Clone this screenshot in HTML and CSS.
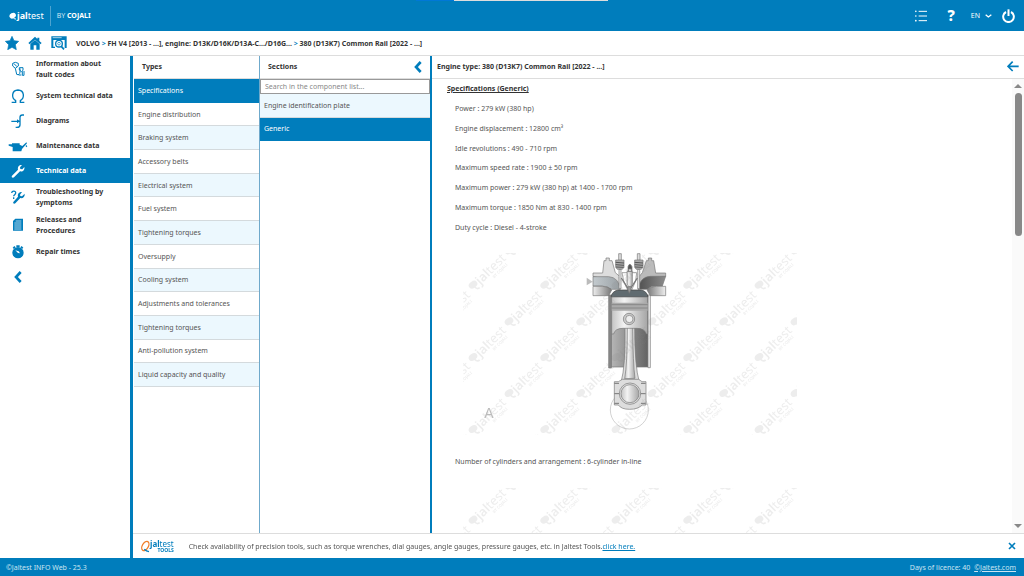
FILE: index.html
```html
<!DOCTYPE html>
<html lang="en">
<head>
    <meta charset="UTF-8">
    <meta name="viewport" content="width=device-width, initial-scale=1.0">
    <title>Jaltest INFO Web</title>
    <link rel="stylesheet" href="styles.css">
</head>
<body>
    <header class="topbar">
        <div class="loader"><span></span></div>
        <a href="#" class="logo">
            <svg class="logo-mark" viewBox="0 0 24 27"><ellipse cx="11" cy="14" rx="10" ry="8" transform="rotate(-30 11 14)"/><path d="M12 19q3 6 9 5" fill="none" stroke="#fff" stroke-width="3"/></svg>
            <span class="logo-name"><b>jal</b>test</span>
        </a>
        <span class="by">BY <b>COJALI</b></span>
        <div class="tools">
            <button class="tool-list" aria-label="List">
                <svg viewBox="0 0 36 36"><path d="M11 4h25M11 18h25M11 32h25" stroke="#fff" stroke-width="3"/><circle cx="2.500" cy="4" r="2.500"/><circle cx="2.500" cy="18" r="2.500"/><circle cx="2.500" cy="32" r="2.500"/></svg>
            </button>
            <button class="tool-help" aria-label="Help">?</button>
            <button class="tool-lang">EN
                <svg viewBox="0 0 21 12"><path d="M2 2l8 7 9-7" fill="none" stroke="#fff" stroke-width="4"/></svg>
            </button>
            <button class="tool-power" aria-label="Log out">
                <svg viewBox="0 0 39 42"><path d="M12 9a16 16 0 1 0 15 0" fill="none" stroke="#fff" stroke-width="6"/><path d="M19.500 1v20" stroke="#fff" stroke-width="6"/></svg>
            </button>
        </div>
    </header>

    <nav class="crumbs">
        <a href="#" aria-label="Favourites"><svg class="icon-star" viewBox="0 0 42 42"><path d="M21 1l6 13 14 2-10 10 3 15-13-7-13 7 3-15L1 16l14-2z" stroke="#007dbc" stroke-width="2"/></svg></a>
        <a href="#" aria-label="Home"><svg class="icon-home" viewBox="0 0 42 42"><path d="M21 2L1 21l4 4 16-14 16 14 4-4-7-6V5h-6v4z"/><path d="M7 24L21 12l14 12v17H25V28h-8v13H7z"/></svg></a>
        <a href="#" aria-label="Search vehicle"><svg class="icon-find" viewBox="0 0 48 42"><path d="M1 1h46v35h-6V12H7v20h5v4H1z"/><path d="M5 5h27" stroke="#fff" stroke-width="2"/><circle cx="24" cy="23" r="10" fill="#fff" stroke="#007dbc" stroke-width="4"/><circle cx="24" cy="23" r="4" fill="none" stroke="#007dbc" stroke-width="2"/><path d="M31 31l8 9" stroke="#007dbc" stroke-width="5"/></svg></a>
        <p>VOLVO <i>&gt;</i> FH V4 [2013 - ...], engine: D13K/D16K/D13A-C.../D16G... <i>&gt;</i> 380 (D13K7) Common Rail [2022 - ...]</p>
    </nav>

    <main class="main">
        <aside class="sidebar">
            <a href="#" class="item">
                <svg viewBox="0 0 48 48"><g fill="none" stroke="#007dbc" stroke-width="3"><path d="M8 7l8-3 9 3v8l-9 7-8-7zM12 8l9 9M16 22l4 18q9 4 10-7V22"/><path d="M28 20h11v8l-4 4-7-5zM37 31v12h5V30M26 42h8"/></g></svg>
                <span>Information about fault codes</span>
            </a>
            <a href="#" class="item">
                <svg viewBox="0 0 48 48"><path d="M5 43h12v-5C3 29 5 7 24 6c19 1 21 23 7 32v5h12" fill="none" stroke="#007dbc" stroke-width="4"/></svg>
                <span>System technical data</span>
            </a>
            <a href="#" class="item">
                <svg viewBox="0 0 48 48"><path d="M4 25h24M42 6h-5q-7 0-7 7v22q0 8-9 8h-4" fill="none" stroke="#007dbc" stroke-width="4"/><path d="M21 19l9 6-9 6z"/></svg>
                <span>Diagrams</span>
            </a>
            <a href="#" class="item">
                <svg class="wide" viewBox="0 0 60 48"><path d="M2 19h10v-3h23v4l8 4 12-11 2 3-15 17-2 7H14V27L2 23zM54 20l4 5-3 3-2-3z"/></svg>
                <span>Maintenance data</span>
            </a>
            <a href="#" class="item active">
                <svg viewBox="0 0 48 48"><path d="M6 38l18-18c-2-9 4-15 12-14l-6 7 1 5 6 1 6-7c2 9-5 15-13 13L12 43c-4 3-9-1-6-5z"/></svg>
                <span>Technical data</span>
            </a>
            <a href="#" class="item">
                <svg viewBox="0 0 48 48"><path d="M5 12c1-8 13-7 12 0 0 5-6 5-6 10M11 25v5" fill="none" stroke="#007dbc" stroke-width="4"/><path d="M10 39l14-16c-2-8 3-14 12-14l-6 8 1 4 5 1 8-8c1 10-6 15-13 13L16 43c-4 3-8-1-6-4z"/></svg>
                <span>Troubleshooting by symptoms</span>
            </a>
            <a href="#" class="item">
                <svg viewBox="0 0 48 48"><path d="M16 5h23v36H9V12z"/><path d="M17 12h17M13 18h21M13 24h21M13 30h21M13 36h21" stroke="#fff" stroke-width="2"/></svg>
                <span>Releases and Procedures</span>
            </a>
            <a href="#" class="item">
                <svg viewBox="0 0 48 48"><path d="M19 4h10v5H19zM8 11l5-5 4 4-5 5zM31 10l4-4 5 5-4 4z"/><circle cx="24" cy="26" r="17"/><path d="M16 19l8 8 6 1-4-6z" fill="#fff"/></svg>
                <span>Repair times</span>
            </a>
            <button class="collapse" aria-label="Collapse menu">
                <svg class="chevron" viewBox="0 0 24 36"><path d="M20 3L6 18l14 15" fill="none" stroke="#007dbc" stroke-width="8"/></svg>
            </button>
        </aside>

        <div class="workspace">
            <div class="panels">
                <section class="types">
                    <h2>Types</h2>
                    <ul class="list">
                        <li class="active"><a href="#">Specifications</a></li>
                        <li><a href="#">Engine distribution</a></li>
                        <li><a href="#">Braking system</a></li>
                        <li><a href="#">Accessory belts</a></li>
                        <li><a href="#">Electrical system</a></li>
                        <li><a href="#">Fuel system</a></li>
                        <li><a href="#">Tightening torques</a></li>
                        <li><a href="#">Oversupply</a></li>
                        <li><a href="#">Cooling system</a></li>
                        <li><a href="#">Adjustments and tolerances</a></li>
                        <li><a href="#">Tightening torques</a></li>
                        <li><a href="#">Anti-pollution system</a></li>
                        <li><a href="#">Liquid capacity and quality</a></li>
                    </ul>
                </section>

                <section class="sections">
                    <h2>Sections
                        <button aria-label="Collapse sections"><svg class="chevron" viewBox="0 0 24 36"><path d="M20 3L6 18l14 15" fill="none" stroke="#007dbc" stroke-width="8"/></svg></button>
                    </h2>
                    <input type="text" class="search" aria-label="Search in the component list" placeholder="Search in the component list...">
                    <ul class="list short">
                        <li class="tint"><a href="#">Engine identification plate</a></li>
                        <li class="active"><a href="#">Generic</a></li>
                    </ul>
                </section>

                <section class="detail">
                    <h2>Engine type: 380 (D13K7) Common Rail [2022 - ...]
                        <button aria-label="Back"><svg class="icon-back" viewBox="0 0 36 33"><path d="M17 2L3 16l14 14M3 16h32" fill="none" stroke="#007dbc" stroke-width="5"/></svg></button>
                    </h2>
                    <div class="scroll">
                        <div class="content">
                            <h3>Specifications (Generic)</h3>
                            <ul class="specs">
                                <li>Power : 279 kW (380 hp)</li>
                                <li>Engine displacement : 12800 cm³</li>
                                <li>Idle revolutions : 490 - 710 rpm</li>
                                <li>Maximum speed rate : 1900 ± 50 rpm</li>
                                <li>Maximum power : 279 kW (380 hp) at 1400 - 1700 rpm</li>
                                <li>Maximum torque : 1850 Nm at 830 - 1400 rpm</li>
                                <li>Duty cycle : Diesel - 4-stroke</li>
                            </ul>

                            <svg class="figure" viewBox="69 39 1002 546">
                                <defs>
                                    <linearGradient id="metal"><stop offset="0" stop-color="#c4c4c4"/><stop offset=".35" stop-color="#f3f3f3"/><stop offset="1" stop-color="#a5a5a5"/></linearGradient>
                                    <linearGradient id="bore"><stop offset="0" stop-color="#b5b5b5"/><stop offset="1" stop-color="#636363"/></linearGradient>
                                    <linearGradient id="intake"><stop offset="0" stop-color="#c3cace"/><stop offset="1" stop-color="#9aa1a5"/></linearGradient>
                                    <linearGradient id="exhaust"><stop offset="0" stop-color="#4f4f4f"/><stop offset="1" stop-color="#8c8c8c"/></linearGradient>
                                    <linearGradient id="flangeLeft"><stop offset="0" stop-color="#eee"/><stop offset="1" stop-color="#777"/></linearGradient>
                                    <linearGradient id="flangeRight"><stop offset="0" stop-color="#777"/><stop offset="1" stop-color="#eee"/></linearGradient>
                                    <g id="mark">
                                        <ellipse rx="14" ry="10" transform="rotate(-35)"/>
                                        <path d="M5 7q8 8 15 2" fill="none" stroke="#888" stroke-width="5"/>
                                        <g transform="rotate(-45)">
                                            <text x="15" y="17" font-size="38"><tspan font-weight="600">jal</tspan>test</text>
                                            <text x="58" y="32" font-size="12" font-weight="600">BY COJALI</text>
                                        </g>
                                    </g>
                                    <g id="marks">
                                        <use href="#mark"/><use href="#mark" x="215"/><use href="#mark" x="430"/><use href="#mark" x="644"/><use href="#mark" x="859"/><use href="#mark" x="1073"/>
                                    </g>
                                    <g id="watermark" fill="#888" opacity=".15">
                                        <use href="#marks" x="-8" y="31"/>
                                        <use href="#marks" x="-116" y="134"/>
                                        <use href="#marks" x="-8" y="244"/>
                                        <use href="#marks" x="-116" y="351"/>
                                        <use href="#marks" x="-8" y="459"/>
                                        <use href="#marks" x="-116" y="567"/>
                                        <use href="#marks" x="-8" y="674"/>
                                    </g>
                                </defs>
                                <path d="M440 113l18 12-18 11z" fill="#bbb"/>
                                <g transform="translate(360 0)" stroke="#777" stroke-width="2">
                                    <!-- crank circle, bore and walls -->
                                    <circle cx="208" cy="510" r="57" fill="#fff" stroke="#bbb"/>
                                    <path d="M154 165h110v216H154z" fill="url(#bore)"/>
                                    <path d="M146 165h8v219h-8z" fill="#888"/>
                                    <path d="M264 165h7v218h-7z" fill="#eee"/>
                                    <!-- cylinder head -->
                                    <path d="M99 99h29l4-37h6v-8h10v8h8l10 36 14 12v35h-35q-20-33-46-36z" fill="#ddd"/>
                                    <path d="M317 99h-30l-6-37h-6v-8h-10v8h-6l-12 36-10 12v35h30q20-33 50-36z" fill="#bbb"/>
                                    <path d="M99 110h47q30 2 35 38h-28q-9-10-28-10H99z" fill="url(#intake)"/>
                                    <path d="M317 109h-46q-31 1-37 39h28q9-10 28-10h17z" fill="url(#exhaust)"/>
                                    <path d="M99 139h28q21 2 28 11l-9 17H99z" fill="url(#flangeLeft)"/>
                                    <path d="M317 139h-28q-21 2-28 11l10 17h46z" fill="url(#flangeRight)"/>
                                    <!-- valves, springs, injector -->
                                    <path d="M176 41h8v20h-8zM232 41h8v20h-8z" fill="#ddd"/>
                                    <path d="M177 88h6v58h-6zM233 88h6v58h-6z" fill="#eee"/>
                                    <path d="M167 60h25v22l-5 6h-15l-5-6zM224 60h25v22l-5 6h-15l-5-6z" fill="#aaa"/>
                                    <path d="M167 67l25 2m-25 5l25 2m-24 5l23 1M224 67l25 2m-25 5l25 2m-24 5l23 1" stroke="#555" stroke-width="3"/>
                                    <path d="M186 98h44l-3 25-12 27h-12l-12-27z" fill="#fff"/>
                                    <path d="M184 114l22 34M232 114l-22 34" stroke-width="4"/>
                                    <path d="M201 94h16v38l-5 8h-6l-5-8z" fill="url(#metal)"/>
                                    <path d="M204 80q5-14 12 0v14h-12z" fill="#555"/>
                                    <path d="M206 87h8v7h-8z" fill="#eee"/>
                                    <path d="M153 171q3-18 22-21h68q18 3 21 21z" fill="#606b70" stroke="#444"/>
                                    <path d="M203 140h11l-2 10-4 10-4-10z" fill="#999"/>
                                    <!-- connecting rod and piston -->
                                    <path d="M195 262h29q0 118 14 164l-55 1q14-48 12-165z" fill="#ddd"/>
                                    <path d="M202 262h16q1 110 7 153l-31 1q8-45 8-154z" fill="url(#metal)"/>
                                    <path d="M155 171h108v111h-4q-5-17-28-17h-42q-24 0-28 17h-6z" fill="url(#metal)"/>
                                    <path d="M155 188h108v24H155z" fill="#aaa" stroke="none"/>
                                    <path d="M155 194h108m-108 10h108" stroke="#777"/>
                                    <circle cx="207" cy="237" r="17" fill="#ccc"/>
                                    <circle cx="208" cy="237" r="11" fill="#eee"/>
                                    <path d="M163 425h12l12-7h49l10 7h12v70h-12q-12 13-37 13t-34-13h-12z" fill="#ddd"/>
                                    <path d="M163 461h94M163 430h14m66 0h14M163 490h14m66 0h14" stroke-width="3"/>
                                    <circle cx="210" cy="461" r="32" fill="#ddd"/>
                                    <circle cx="210" cy="461" r="27" fill="url(#metal)"/>
                                </g>
                                <use href="#watermark"/>
                                <text class="figure-letter" x="133" y="533">A</text>
                            </svg>

                            <p>Number of cylinders and arrangement : 6-cylinder in-line</p>

                            <svg class="figure" viewBox="69 39 1002 546"><use href="#watermark"/></svg>
                        </div>
                        <div class="scrollbar">
                            <span class="up"></span>
                            <span class="thumb"></span>
                            <span class="down"></span>
                        </div>
                    </div>
                </section>
            </div>

            <div class="notice">
                <span class="notice-logo">
                    <svg viewBox="0 0 27 39"><ellipse cx="13" cy="18" rx="9" ry="15" transform="rotate(30 13 18)" fill="none" stroke="#f07d28" stroke-width="4"/><path d="M10 28q6 6 14 7" fill="none" stroke="#007dbc" stroke-width="4"/></svg>
                    <span class="notice-name"><span><b>jal</b>test</span><small>TOOLS</small></span>
                </span>
                <p>Check availability of precision tools, such as torque wrenches, dial gauges, angle gauges, pressure gauges, etc. in Jaltest Tools.<a href="#">click here.</a></p>
                <button aria-label="Close"><svg viewBox="0 0 24 24"><path d="M3 3l18 18M21 3L3 21" stroke="#007dbc" stroke-width="5"/></svg></button>
            </div>
        </div>
    </main>

    <footer class="footer">
        <span>©Jaltest INFO Web - 25.3</span>
        <span>Days of licence: 40 <a href="#">©Jaltest.com</a></span>
    </footer>
</body>
</html>
```
FILE: styles.css
```css
* {
    box-sizing: border-box;
}

body {
    margin: 0;
    height: 100vh;
    display: flex;
    flex-direction: column;
    overflow: hidden;
    font-family: "Noto Sans", "Open Sans", sans-serif;
    font-size: 7px;
    line-height: 11px;
    color: #555;
    background: #fff;
}

h2, h3, p, ul {
    margin: 0;
    padding: 0;
}

ul {
    list-style: none;
}

a {
    color: inherit;
    text-decoration: none;
}

button {
    display: flex;
    align-items: center;
    padding: 0;
    border: 0;
    background: none;
    font: inherit;
    color: inherit;
    cursor: pointer;
}

svg {
    display: block;
    flex: none;
    fill: #007dbc;
}

/* top bar */
.topbar {
    position: relative;
    flex: none;
    display: flex;
    align-items: center;
    height: 31px;
    padding: 0 9px;
    background: #007dbc;
    color: #fff;
}

.topbar svg {
    fill: #fff;
}

.loader {
    position: absolute;
    top: 0;
    left: 416px;
    width: 192px;
    height: 1px;
    padding-left: 38px;
    background: #0078d7;
}

.loader span {
    display: block;
    height: 1px;
    background: #ddd;
}

.logo {
    display: flex;
    align-items: center;
    padding-right: 6px;
    border-right: 1px solid #4da4d0;
    line-height: 20px;
}

.logo-mark {
    width: 8px;
    height: 9px;
}

.logo-name {
    font-size: 9px;
}

.by {
    margin-left: 6px;
    color: #cce5f2;
}

.by b {
    color: #fff;
}

.tools {
    display: flex;
    align-items: center;
    margin-left: auto;
}

.tool-list svg {
    width: 12px;
    height: 12px;
}

.tool-help {
    margin: 0 16px 0 20px;
    font-size: 15px;
    font-weight: 800;
}

.tool-lang {
    gap: 5px;
}

.tool-lang svg {
    width: 7px;
    height: 4px;
}

.tool-power {
    margin-left: 10px;
}

.tool-power svg {
    width: 13px;
    height: 14px;
}

/* breadcrumb */
.crumbs {
    position: relative;
    z-index: 1;
    flex: none;
    display: flex;
    align-items: center;
    gap: 9px;
    height: 24px;
    padding-left: 5px;
    box-shadow: 0 1px 0 #ddd;
    font-weight: 700;
    color: #333;
}

.crumbs svg {
    width: 14px;
    height: 14px;
}

.crumbs .icon-find {
    width: 16px;
}

.crumbs i {
    font-style: normal;
    color: #007dbc;
}

.main {
    flex: 1;
    min-height: 0;
    display: flex;
}

/* left menu */
.sidebar {
    flex: none;
    width: 133px;
    border-right: 3px solid #007dbc;
    font-weight: 700;
    color: #333;
}

.item {
    display: flex;
    align-items: center;
    gap: 10px;
    min-height: 25px;
    padding: 3px 12px 3px 10px;
}

.item svg {
    width: 16px;
    height: 16px;
}

.item .wide {
    width: 20px;
    margin: 0 -2px;
}

.item.active {
    background: #007dbc;
    color: #fff;
}

.item.active svg {
    fill: #fff;
}

.chevron {
    width: 8px;
    height: 12px;
}

.collapse {
    height: 26px;
    padding-left: 14px;
}

/* panels */
.workspace {
    flex: 1;
    min-width: 0;
    display: flex;
    flex-direction: column;
}

.panels {
    flex: 1;
    min-height: 0;
    display: flex;
}

h2 {
    flex: none;
    display: flex;
    align-items: center;
    justify-content: space-between;
    height: 24px;
    padding: 0 8px;
    border-bottom: 1px solid #ddd;
    font-size: 7px;
    color: #333;
}

.types {
    flex: none;
    width: 127px;
    padding-left: 1px;
    border-right: 1px solid #6fa9cb;
}

.list {
    display: grid;
    grid-auto-rows: 1fr;
    height: 308px;
}

.list.short {
    height: 47px;
}

.list li {
    border-bottom: 1px solid #d4dadd;
}

.list a {
    display: flex;
    align-items: center;
    height: 100%;
    padding: 0 4px;
}

.types li:nth-child(odd),
.list .tint {
    background: #ecf8fe;
}

.list .active,
.types .active:first-child {
    background: #007dbc;
    border-color: #007dbc;
    color: #fff;
}

.sections {
    flex: none;
    width: 172px;
    border-right: 2px solid #007dbc;
}

.search {
    display: block;
    width: 100%;
    height: 15px;
    padding: 0 4px;
    border: 1px solid #999;
    font: inherit;
    color: #555;
}

.search::placeholder {
    color: #888;
}

.detail {
    flex: 1;
    min-width: 0;
    display: flex;
    flex-direction: column;
}

.detail h2 {
    padding: 0 5px;
}

.icon-back {
    width: 12px;
    height: 11px;
}

.scroll {
    flex: 1;
    min-height: 0;
    display: flex;
}

.content {
    flex: 1;
    overflow: hidden;
    padding: 4px 15px;
}

h3 {
    font-size: 7px;
    color: #333;
    text-decoration: underline;
}

.specs {
    display: grid;
    grid-auto-rows: 1fr;
    align-items: center;
    height: 138px;
    margin: 5px 8px 16px;
}

.content p {
    margin: 21px 8px;
}

.figure {
    width: 334px;
    height: 182px;
    margin-left: 16px;
}

.figure-letter {
    font-family: "Liberation Sans", sans-serif;
    font-size: 42px;
    fill: #bbb;
}

.scrollbar {
    flex: none;
    display: flex;
    flex-direction: column;
    align-items: center;
    width: 12px;
    padding: 5px 0;
    background: #fafafa;
}

.up, .down {
    border: 4px solid transparent;
    border-top-width: 0;
    border-bottom: 4px solid #888;
}

.down {
    margin-top: auto;
    border-top: 4px solid #888;
    border-bottom-width: 0;
}

.thumb {
    width: 7px;
    height: 143px;
    margin-top: 5px;
    border-radius: 4px;
    background: #888;
}

/* notice */
.notice {
    flex: none;
    display: flex;
    align-items: center;
    height: 25px;
    padding: 0 8px;
    border-top: 1px solid #ddd;
}

.notice-logo {
    display: flex;
    align-items: center;
    margin-right: 15px;
    color: #007dbc;
}

.notice-logo svg {
    width: 9px;
    height: 13px;
}

.notice-name {
    display: flex;
    flex-direction: column;
    align-items: flex-end;
    font-size: 8px;
    line-height: 8px;
}

.notice-name small {
    font-size: 5px;
    font-weight: 700;
    line-height: 5px;
}

.notice a {
    color: #007dbc;
    text-decoration: underline;
}

.notice button {
    margin-left: auto;
}

.notice button svg {
    width: 8px;
    height: 8px;
}

/* footer */
.footer {
    flex: none;
    display: flex;
    align-items: center;
    justify-content: space-between;
    height: 18px;
    padding: 0 8px 0 6px;
    background: #007dbc;
    color: #cce5f2;
}

.footer a {
    margin-left: 2px;
    text-decoration: underline;
}
```
